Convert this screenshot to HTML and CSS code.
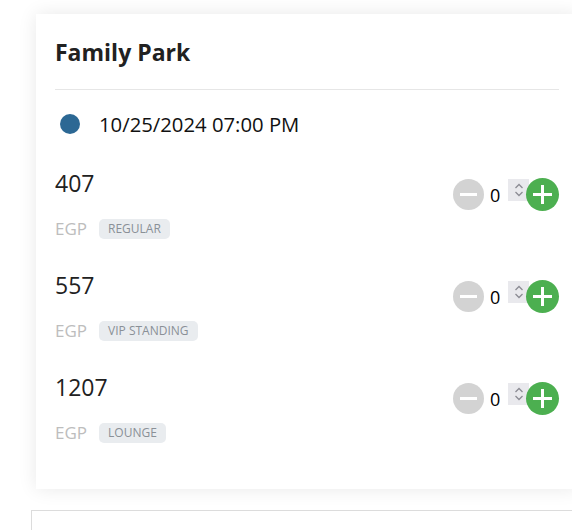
FILE: index.html
```html
<!DOCTYPE html>
<html>
<head>
<meta charset="utf-8">
<link rel="stylesheet" href="styles.css">
</head>
<body>
<div class="page">
  <section class="card">
    <h2 class="title">Family Park</h2>
    <div class="date-row">
      <span class="dot"></span>
      <span class="date">10/25/2024 07:00 PM</span>
    </div>
    <div class="ticket">
      <div class="info">
        <div class="price">407</div>
        <div class="meta"><span class="cur">EGP</span><span class="badge">REGULAR</span></div>
      </div>
      <div class="qty">
        <span class="btn minus"></span>
        <span class="val">0</span>
        <span class="spin"><svg width="12" height="18" viewBox="0 0 12 18"><path d="M2.5 7 L6 3.5 L9.5 7" fill="none" stroke="#8c8c94" stroke-width="1.3"/><path d="M2.5 11 L6 14.5 L9.5 11" fill="none" stroke="#8c8c94" stroke-width="1.3"/></svg></span>
        <span class="btn plus"></span>
      </div>
    </div>
    <div class="ticket">
      <div class="info">
        <div class="price">557</div>
        <div class="meta"><span class="cur">EGP</span><span class="badge">VIP STANDING</span></div>
      </div>
      <div class="qty">
        <span class="btn minus"></span>
        <span class="val">0</span>
        <span class="spin"><svg width="12" height="18" viewBox="0 0 12 18"><path d="M2.5 7 L6 3.5 L9.5 7" fill="none" stroke="#8c8c94" stroke-width="1.3"/><path d="M2.5 11 L6 14.5 L9.5 11" fill="none" stroke="#8c8c94" stroke-width="1.3"/></svg></span>
        <span class="btn plus"></span>
      </div>
    </div>
    <div class="ticket">
      <div class="info">
        <div class="price">1207</div>
        <div class="meta"><span class="cur">EGP</span><span class="badge">LOUNGE</span></div>
      </div>
      <div class="qty">
        <span class="btn minus"></span>
        <span class="val">0</span>
        <span class="spin"><svg width="12" height="18" viewBox="0 0 12 18"><path d="M2.5 7 L6 3.5 L9.5 7" fill="none" stroke="#8c8c94" stroke-width="1.3"/><path d="M2.5 11 L6 14.5 L9.5 11" fill="none" stroke="#8c8c94" stroke-width="1.3"/></svg></span>
        <span class="btn plus"></span>
      </div>
    </div>
  </section>
  <section class="next"></section>
</div>
</body>
</html>
```

FILE: styles.css
```css
html, body {
  margin: 0;
  padding: 0;
  background: #fff;
  overflow: hidden;
}
body {
  font-family: "Open Sans", "Noto Sans", sans-serif;
  color: #212121;
}
.page {
  padding: 14px 0 0 31px;
  width: 560px;
}
.card {
  margin-left: 5px;
  width: 504px;
  padding: 22px 19px 36px 19px;
  background: #fff;
  box-shadow: 0 0 18px rgba(0, 0, 0, 0.09);
}
.title {
  margin: 0;
  font-size: 23px;
  font-weight: 700;
  line-height: 32px;
  padding-bottom: 21px;
  border-bottom: 1px solid #e6e6e6;
  color: #212121;
}
.date-row {
  display: flex;
  align-items: center;
  gap: 19px;
  margin-top: 23px;
  padding-left: 5px;
}
.dot {
  width: 20px;
  height: 20px;
  border-radius: 50%;
  background: #2c6894;
}
.date {
  font-size: 20.3px;
  line-height: 22px;
  color: #111;
}
.ticket {
  display: flex;
  justify-content: space-between;
  align-items: flex-start;
  margin-top: 32px;
  height: 82px;
}
.ticket + .ticket {
  margin-top: 20px;
}
.price {
  font-size: 23px;
  line-height: 32px;
}
.meta {
  display: flex;
  align-items: center;
  gap: 12px;
  margin-top: 20px;
}
.cur {
  font-size: 17px;
  line-height: 20px;
  color: #bdbdbd;
}
.badge {
  font-size: 12px;
  color: #8a9097;
  background: #e9ecef;
  border-radius: 5px;
  padding: 2px 9px;
  line-height: 16px;
}
.qty {
  display: flex;
  align-items: center;
  margin-top: 11px;
}
.btn {
  position: relative;
  border-radius: 50%;
  display: block;
}
.minus {
  width: 31px;
  height: 31px;
  background: #d3d3d3;
}
.minus::after {
  content: "";
  position: absolute;
  left: 7px;
  right: 7px;
  top: 14px;
  height: 3px;
  background: #fff;
}
.plus {
  width: 33px;
  height: 33px;
  background: #4caf50;
  margin-left: -3px;
}
.plus::before, .plus::after {
  content: "";
  position: absolute;
  background: #fff;
}
.plus::before {
  left: 7px;
  right: 7px;
  top: 15px;
  height: 3px;
}
.plus::after {
  top: 7px;
  bottom: 7px;
  left: 15px;
  width: 3px;
}
.val {
  font-size: 18px;
  margin-left: 6px;
  width: 18px;
  color: #000;
}
.spin {
  width: 21px;
  height: 22px;
  background: #e9e9ed;
  display: flex;
  align-items: center;
  justify-content: center;
  margin-top: -10px;
}
.next {
  margin-top: 21px;
  height: 60px;
  border: 1px solid #dcdcdc;
  width: 560px;
}
```
